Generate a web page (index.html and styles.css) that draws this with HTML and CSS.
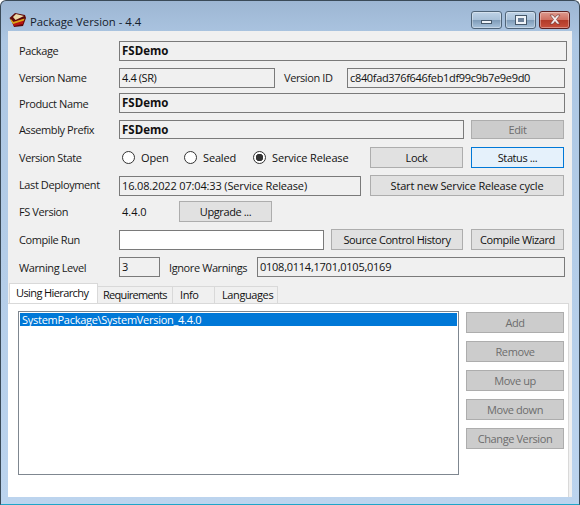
FILE: index.html
```html
<!DOCTYPE html>
<html lang="en">
  <head>
    <title>Package Version - 4.4</title>
    <meta charset="utf-8" />
    <link rel="stylesheet" href="styles.css">
  </head>
  <body>
    <div class="window">
      <div class="titlebar">
        <svg class="app-icon" width="18" height="16" viewBox="0 0 18 16">
          <path d="M0.500 6 L6 1 L16 3 L17 6 L14 14 L5 15 L3 10 Z" fill="#5e0808"/>
          <path d="M3 10 L15 7 L14 12 L5 14 Z" fill="#b81414"/>
          <path d="M1.500 6.500 L4.500 10 L15.500 6.500 L15 8.500 L4 12 L2 9 Z" fill="#d8a818"/>
          <path d="M4 5 L7 2 L15 4 L6.500 8 Z" fill="#ead8a8"/>
        </svg>
        <span class="title">Package Version - 4.4</span>
        <div class="caption-buttons">
          <div class="cap-btn cap-min"><span class="glyph-min"></span></div>
          <div class="cap-btn cap-max"><span class="glyph-max"></span></div>
          <div class="cap-btn cap-close">
            <svg width="14" height="11" viewBox="0 0 14 11">
              <path d="M2 1 L5 1 L7 3.500 L9 1 L12 1 L8.500 5.500 L12 10 L9 10 L7 7.500 L5 10 L2 10 L5.500 5.500 Z" fill="#f4eeee" stroke="#6b2a25" stroke-width="0.600"/>
            </svg>
          </div>
        </div>
      </div>
      <div class="client">
        <div class="row r-package">
          <label class="lbl">Package</label>
          <div class="field bold w-package">FSDemo</div>
        </div>
        <div class="row r-version">
          <label class="lbl">Version Name</label>
          <div class="field w-vname">4.4 (SR)</div>
          <label class="lbl lbl-id">Version ID</label>
          <div class="field w-vid">c840fad376f646feb1df99c9b7e9e9d0</div>
        </div>
        <div class="row r-product">
          <label class="lbl">Product Name</label>
          <div class="field bold w-product">FSDemo</div>
        </div>
        <div class="row r-assembly">
          <label class="lbl">Assembly Prefix</label>
          <div class="field bold w-assembly">FSDemo</div>
          <button class="btn disabled w-btn">Edit</button>
        </div>
        <div class="row r-state">
          <label class="lbl">Version State</label>
          <div class="radios">
            <span class="radio"><i class="dot"></i>Open</span>
            <span class="radio"><i class="dot"></i>Sealed</span>
            <span class="radio"><i class="dot checked"></i>Service Release</span>
          </div>
          <button class="btn w-btn">Lock</button>
          <button class="btn focus w-btn">Status ...</button>
        </div>
        <div class="row r-deploy">
          <label class="lbl">Last Deployment</label>
          <div class="field w-deploy">16.08.2022 07:04:33 (Service Release)</div>
          <button class="btn w-cycle">Start new Service Release cycle</button>
        </div>
        <div class="row r-fs">
          <label class="lbl">FS Version</label>
          <span class="fs-value">4.4.0</span>
          <button class="btn w-btn">Upgrade ...</button>
        </div>
        <div class="row r-compile">
          <label class="lbl">Compile Run</label>
          <div class="field white w-compile"></div>
          <button class="btn w-history">Source Control History</button>
          <button class="btn w-btn">Compile Wizard</button>
        </div>
        <div class="row r-warn">
          <label class="lbl">Warning Level</label>
          <div class="field w-level">3</div>
          <label class="lbl lbl-ignore">Ignore Warnings</label>
          <div class="field w-ignore">0108,0114,1701,0105,0169</div>
        </div>
        <div class="tabs">
          <div class="tab active">Using Hierarchy</div>
          <div class="tab t-req">Requirements</div>
          <div class="tab t-info">Info</div>
          <div class="tab t-lang">Languages</div>
        </div>
        <div class="tab-panel">
          <div class="listbox">
            <div class="list-item">SystemPackage\SystemVersion_4.4.0</div>
          </div>
          <div class="side-buttons">
            <button class="btn disabled">Add</button>
            <button class="btn disabled">Remove</button>
            <button class="btn disabled">Move up</button>
            <button class="btn disabled">Move down</button>
            <button class="btn disabled">Change Version</button>
          </div>
        </div>
      </div>
    </div>
  </body>
</html>
```

FILE: styles.css
```css
html,
body {
  margin: 0;
  height: 505px;
  background: #fff;
  font-family: "Open Sans", "Noto Sans", sans-serif;
  font-size: 11px;
  letter-spacing: -0.400px;
  color: #111;
  overflow: hidden;
}

.window {
  box-sizing: border-box;
  height: 505px;
  width: 580px;
  border: 1px solid #3a4a58;
  border-bottom-color: #1fa5c8;
  border-radius: 6px 6px 0 0;
  background: linear-gradient(#9db6d3 0, #adc7e3 40px, #bcd4ee 100%);
  padding: 0 7px 7px 7px;
  display: flex;
  flex-direction: column;
}

.titlebar {
  box-sizing: border-box;
  height: 30px;
  padding-top: 10px;
  display: flex;
  align-items: center;
  flex: none;
}

.app-icon {
  margin: -3px 3px 0 1px;
}

.title {
  font-size: 11.300px;
  letter-spacing: 0;
  color: #14202c;
}

.caption-buttons {
  margin-left: auto;
  margin-right: 2px;
  margin-top: -3px;
  display: flex;
  gap: 3px;
}

.cap-btn {
  box-sizing: border-box;
  height: 18px;
  width: 31px;
  border: 1px solid #4f6478;
  border-radius: 3px;
  background: linear-gradient(#bed2e6 0, #a8c0d8 50%, #7f9cb8 52%, #a9c3dc 100%);
  box-shadow: inset 0 0 0 1px rgba(255, 255, 255, 0.35);
  display: flex;
  align-items: center;
  justify-content: center;
}

.cap-close {
  border-color: #5c2020;
  background: linear-gradient(#dd9a8e 0, #cf6f60 50%, #b23a28 52%, #c8503c 100%);
}

.glyph-min {
  display: block;
  width: 9px;
  height: 2px;
  margin-top: 5px;
  background: #eef3f8;
  border: 1px solid #46586a;
}

.glyph-max {
  display: block;
  box-sizing: border-box;
  width: 10px;
  height: 8px;
  background: #6c8098;
  border: 2px solid #eef3f8;
  outline: 1px solid #46586a;
}

.client {
  flex: 1;
  background: #f0f0f0;
}

.row {
  display: flex;
  align-items: center;
  padding-left: 11px;
  white-space: nowrap;
}

.lbl {
  width: 100px;
  flex: none;
  color: #1a1a1a;
}

.r-package .lbl,
.r-version .lbl,
.r-deploy .lbl {
  padding-bottom: 2px;
}

.field {
  box-sizing: border-box;
  height: 20px;
  line-height: 17px;
  padding-left: 2px;
  border: 1px solid #7a7a7a;
  background: #f0f0f0;
  flex: none;
}

.field.bold {
  font-size: 11.500px;
  font-weight: 700;
  letter-spacing: 0;
}

.field.white {
  background: #fff;
}

.btn {
  box-sizing: border-box;
  height: 21px;
  padding: 0;
  border: 1px solid #adadad;
  background: #e1e1e1;
  color: #111;
  font: inherit;
  letter-spacing: inherit;
  flex: none;
}

.btn.disabled {
  background: #cccccc;
  color: #6d6d6d;
}

.btn.focus {
  background: #e5f1fb;
  border-color: #0078d7;
}

.w-btn {
  width: 93px;
}

.r-package {
  margin-top: 10px;
}

.w-package {
  width: 448px;
}

.r-version {
  margin-top: 7px;
}

.w-vname {
  width: 156px;
}

.lbl-id {
  margin-left: 9px;
  width: 63px;
}

.w-vid {
  width: 218px;
  letter-spacing: -0.330px;
}

.r-product {
  margin-top: 5px;
}

.w-product {
  width: 446px;
}

.r-assembly {
  margin-top: 7px;
}

.r-assembly .w-assembly {
  width: 345px;
  height: 19px;
}

.r-assembly .btn {
  height: 19px;
  margin-left: 7px;
}

.r-state {
  margin-top: 8px;
}

.radios {
  display: flex;
  width: 251px;
  flex: none;
  letter-spacing: -0.150px;
}

.radio {
  display: flex;
  align-items: center;
}

.radio:nth-child(1) {
  width: 62px;
  margin-left: 3px;
}

.radio:nth-child(2) {
  width: 69px;
}

.dot {
  box-sizing: border-box;
  width: 13px;
  height: 13px;
  margin-right: 6px;
  border: 1px solid #333;
  border-radius: 50%;
  background: #fff;
}

.dot.checked {
  background: radial-gradient(circle, #333 0, #333 3.500px, #fff 4px);
}

.r-state .btn + .btn {
  margin-left: 8px;
}

.r-deploy {
  margin-top: 7px;
}

.w-deploy {
  width: 242px;
  letter-spacing: -0.150px;
}

.w-cycle {
  width: 194px;
  margin-left: 9px;
  letter-spacing: -0.170px;
}

.r-fs {
  margin-top: 5px;
}

.fs-value {
  width: 60px;
  padding-left: 3px;
  box-sizing: border-box;
  flex: none;
  letter-spacing: 0;
}

.r-compile {
  margin-top: 7px;
}

.w-compile {
  width: 205px;
}

.w-history {
  width: 132px;
  margin-left: 7px;
}

.r-compile .w-btn {
  margin-left: 8px;
}

.r-warn {
  margin-top: 7px;
}

.w-level {
  width: 41px;
}

.lbl-ignore {
  margin-left: 9px;
  width: 88px;
}

.w-ignore {
  width: 308px;
  letter-spacing: -0.250px;
}

.tabs {
  display: flex;
  align-items: flex-end;
  margin-top: 6px;
  height: 20px;
  padding-left: 1px;
}

.tab {
  box-sizing: border-box;
  height: 17px;
  line-height: 16px;
  padding-left: 7px;
  border: 1px solid #d9d9d9;
  border-bottom: none;
  border-left: none;
  white-space: nowrap;
}

.tab.active {
  width: 89px;
  height: 20px;
  line-height: 17px;
  padding-left: 6px;
  background: #fff;
  border-left: 1px solid #d9d9d9;
  letter-spacing: -0.600px;
}

.t-req {
  width: 75px;
  padding-left: 5px;
  letter-spacing: -0.700px;
}

.t-info {
  width: 42px;
}

.t-lang {
  width: 63px;
}

.tab-panel {
  box-sizing: border-box;
  width: 561px;
  height: 194px;
  background: #fff;
  border-top: 1px solid #d9d9d9;
  border-right: 1px solid #d9d9d9;
  display: flex;
  padding: 7px 0 0 10px;
  gap: 7px;
}

.listbox {
  box-sizing: border-box;
  width: 441px;
  height: 164px;
  border: 1px solid #7f8790;
  padding: 1px;
}

.list-item {
  height: 13px;
  line-height: 13px;
  padding-left: 2px;
  background: #0078d7;
  color: #fff;
  letter-spacing: -0.270px;
}

.side-buttons {
  display: flex;
  flex-direction: column;
  gap: 8px;
  width: 98px;
  padding-top: 1px;
}
```
